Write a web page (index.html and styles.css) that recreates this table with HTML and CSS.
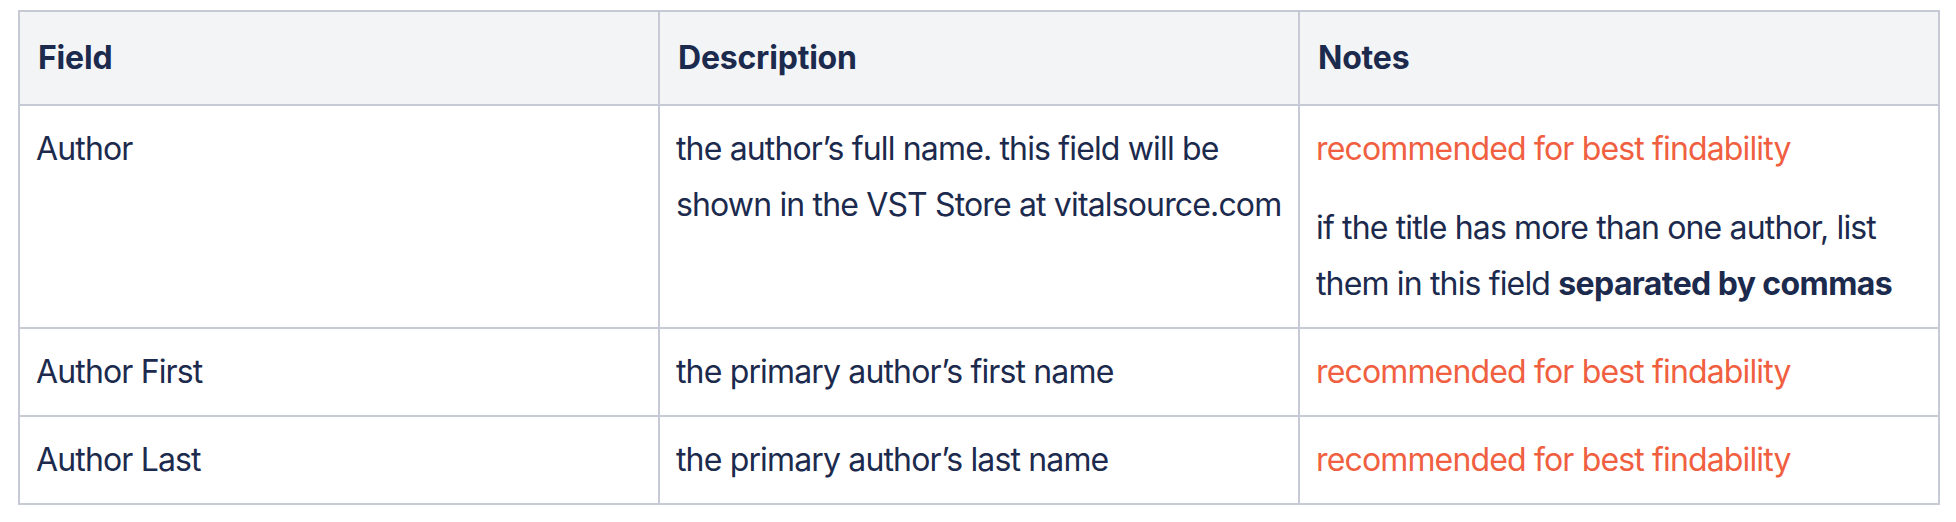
FILE: index.html
```html
<!DOCTYPE html>
<html lang="en">
<head>
<meta charset="utf-8">
<title>Author fields</title>
<link rel="stylesheet" href="styles.css">
</head>
<body>
<div class="wrap">
<table class="fields">
  <colgroup><col class="c"><col class="c"><col class="c"></colgroup>
  <thead>
    <tr><th>Field</th><th>Description</th><th>Notes</th></tr>
  </thead>
  <tbody>
    <tr>
      <td>Author</td>
      <td>the author’s full name. this field will be shown in the VST Store at vitalsource.com</td>
      <td>
        <p class="rec">recommended for best findability</p>
        <p class="note">if the title has more than one author, list them in this field <strong>separated by commas</strong></p>
      </td>
    </tr>
    <tr>
      <td>Author First</td>
      <td>the primary author’s first name</td>
      <td><p class="rec">recommended for best findability</p></td>
    </tr>
    <tr>
      <td>Author Last</td>
      <td>the primary author’s last name</td>
      <td><p class="rec">recommended for best findability</p></td>
    </tr>
  </tbody>
</table>
</div>
</body>
</html>
```
FILE: styles.css
```css
html, body {
  margin: 0;
  padding: 0;
  background: #ffffff;
}
.wrap {
  padding: 10px 18px;
}
.fields {
  width: 1920px;
  table-layout: fixed;
  border-collapse: collapse;
  border: 2px solid #c6cad4;
  font-family: Inter, "Noto Sans", sans-serif;
  font-size: 32px;
  line-height: 56px;
  letter-spacing: -0.85px;
  color: #1c2a4d;
}
.fields .c {
  width: 640px;
}
.fields th,
.fields td {
  border: 2px solid #c6cad4;
  padding: 15px 8px 15px 16px;
  text-align: left;
  vertical-align: top;
}
.fields th {
  background: #f3f4f6;
  font-weight: 700;
  letter-spacing: -0.2px;
  padding-top: 18px;
  padding-bottom: 18px;
  padding-left: 18px;
}
.fields p {
  margin: 0;
}
.fields p + p {
  margin-top: 23px;
}
.rec {
  color: #f06040;
}
.note strong {
  font-weight: 700;
  letter-spacing: -0.6px;
}
```
